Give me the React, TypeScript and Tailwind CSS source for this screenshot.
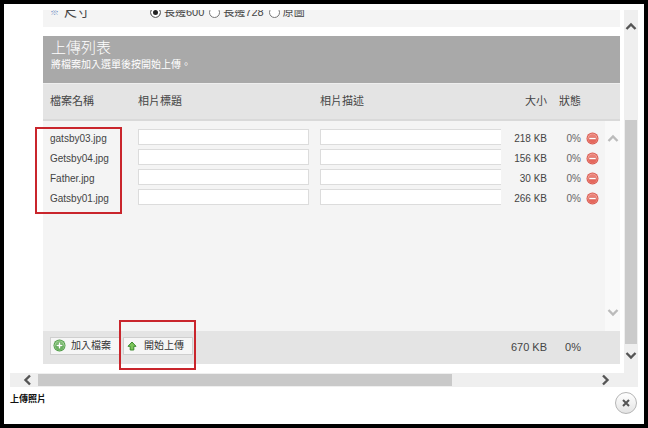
import React from "react";

type UploadFile = { name: string; size: string; progress: string };

const files: UploadFile[] = [
  { name: "gatsby03.jpg", size: "218 KB", progress: "0%" },
  { name: "Getsby04.jpg", size: "156 KB", progress: "0%" },
  { name: "Father.jpg", size: "30 KB", progress: "0%" },
  { name: "Gatsby01.jpg", size: "266 KB", progress: "0%" },
];

const sizes = ["長邊600", "長邊728", "原圖"];

function Chevron({ dir, className }: { dir: "up" | "down" | "left" | "right"; className?: string }) {
  const points = {
    up: "1.5,8 6,3.5 10.5,8",
    down: "1.5,4 6,8.5 10.5,4",
    left: "8,1.5 3.5,6 8,10.5",
    right: "4,1.5 8.5,6 4,10.5",
  }[dir];
  return (
    <svg viewBox="0 0 12 12" className={`size-3 ${className ?? ""}`} fill="none" stroke="currentColor" strokeWidth="2.4">
      <polyline points={points} />
    </svg>
  );
}

function RemoveIcon() {
  return (
    <svg viewBox="0 0 13 13" className="size-[13px]">
      <circle cx="6.5" cy="6.5" r="6" fill="#d9594f" />
      <circle cx="6.5" cy="6.5" r="5" fill="#f3aaa2" />
      <circle cx="6.5" cy="6.5" r="4.3" fill="#ea8075" />
      <path d="M2.2 7a4.3 4.3 0 0 0 8.6 0z" fill="#e4685d" />
      <rect x="3" y="5.5" width="7" height="2.1" rx="0.6" fill="#fff" stroke="#cf5148" strokeWidth="0.5" />
    </svg>
  );
}

function AddIcon() {
  return (
    <svg viewBox="0 0 13 13" className="size-[13px] shrink-0">
      <circle cx="6.5" cy="6.5" r="6" fill="#4d9a45" />
      <circle cx="6.5" cy="6.5" r="5.1" fill="#b4dcab" />
      <circle cx="6.5" cy="6.5" r="4.4" fill="#82bf77" />
      <path d="M2.1 6.8a4.4 4.4 0 0 0 8.8 0z" fill="#6bb160" />
      <path d="M6.5 3.4v6.2M3.4 6.5h6.2" stroke="#4a9440" strokeWidth="2.6" />
      <path d="M6.5 3.6v5.8M3.6 6.5h5.8" stroke="#fff" strokeWidth="1.6" />
    </svg>
  );
}

function StartIcon() {
  return (
    <svg viewBox="0 0 10 10" className="size-[10px] shrink-0">
      <path d="M5 1 9 5.3H6.8V9H3.2V5.3H1z" fill="#7cc45a" stroke="#3a8a2c" strokeWidth="1" strokeLinejoin="round" />
    </svg>
  );
}

const toolButton =
  "flex h-[18px] w-[70px] items-center border border-[#cfcfcf] bg-[#f6f6f6] text-[10px] leading-4 whitespace-nowrap text-[#333]";

export default function App() {
  return (
    <div className="flex h-screen flex-col overflow-hidden border-4 border-black bg-white px-[6px] pt-[6px] font-['Liberation_Sans','Noto_Sans_CJK_TC',sans-serif] text-[#444]">
      <div className="flex">
        <main className="min-w-0 flex-1 pr-1 pb-[9px] pl-[33px]">
          <fieldset aria-label="尺寸" className="flex h-[17px] items-end overflow-hidden bg-[#f4f4f4] pb-[5px] text-[11px] leading-5">
            <span className="w-[21px] pl-[7px] text-[9px] text-[#6f8fc4]" aria-hidden="true">※</span>
            <span className="w-[86px] text-[13px]">尺寸</span>
            {sizes.map((label, i) => (
              <label key={label} className="mr-[5px] flex items-center gap-[3px]">
                <input
                  type="radio"
                  name="size"
                  defaultChecked={i === 0}
                  className="size-[11px] appearance-none rounded-full border border-[#777] bg-white checked:bg-[#222] checked:shadow-[inset_0_0_0_2px_white]"
                />
                {label}
              </label>
            ))}
          </fieldset>

          <header className="mt-[9px] h-[47px] bg-[#a9a9a9] px-2 pt-[2px] text-white">
            <h1 className="text-[15px] leading-5 font-light">上傳列表</h1>
            <p className="text-[10px] leading-[14px]">將檔案加入選單後按開始上傳。</p>
          </header>

          <table className="w-full table-fixed border-separate border-spacing-0 bg-[#f4f4f4] text-[10px]">
            <colgroup>
              <col className="w-[95px]" />
              <col className="w-[182px]" />
              <col />
              <col className="w-[46px]" />
              <col className="w-[34px]" />
              <col className="w-[24px]" />
              <col className="w-[15px]" />
            </colgroup>
            <thead>
              <tr className="h-[38px] bg-[#e4e4e4] text-left text-[11px] *:border-t *:border-b-2 *:border-t-[#eee] *:border-b-[#d9d9d9] *:p-0 *:font-normal">
                <th scope="col"><span className="pl-[7px]">檔案名稱</span></th>
                <th scope="col">相片標題</th>
                <th scope="col">相片描述</th>
                <th scope="col" className="text-right">大小</th>
                <th scope="col" className="text-right">狀態</th>
                <td colSpan={2} />
              </tr>
            </thead>
            <tbody>
              <tr className="h-2">
                <td className="relative p-0">
                  <div className="pointer-events-none absolute top-[6px] left-[-8px] size-[87px] border-2 border-[#c9252c]" />
                </td>
                <td colSpan={5} className="p-0" />
                <td rowSpan={6} className="h-px bg-[#f9f9f9] p-0">
                  <div className="flex h-[210px] flex-col items-center justify-between pt-3 pb-[13px] text-[#bbb]">
                    <button type="button" aria-label="向上捲動清單"><Chevron dir="up" /></button>
                    <button type="button" aria-label="向下捲動清單"><Chevron dir="down" /></button>
                  </div>
                </td>
              </tr>
              {files.map((file) => (
                <tr key={file.name} className="h-5 *:p-0 *:align-top *:leading-5">
                  <td><span className="pl-[7px]">{file.name}</span></td>
                  <td>
                    <input aria-label={`${file.name} 相片標題`} className="block h-4 w-[171px] border border-[#dcdcdc] bg-white px-1" />
                  </td>
                  <td>
                    <input aria-label={`${file.name} 相片描述`} className="block h-4 w-full border border-r-0 border-[#dcdcdc] bg-white px-1" />
                  </td>
                  <td className="text-right">{file.size}</td>
                  <td className="text-right text-[#666]">{file.progress}</td>
                  <td>
                    <button type="button" aria-label={`移除 ${file.name}`} className="flex h-[18px] items-center pl-[5px]">
                      <RemoveIcon />
                    </button>
                  </td>
                </tr>
              ))}
              <tr className="h-[122px]"><td colSpan={6} className="p-0" /></tr>
            </tbody>
            <tfoot>
              <tr className="h-[33px] bg-[#e4e4e4] text-[11px] *:p-0">
                <td colSpan={3}>
                  <div className="flex gap-[3px] pb-1 pl-[7px]">
                    <button type="button" className={`${toolButton} gap-[5px] pl-[2px]`}>
                      <AddIcon />
                      加入檔案
                    </button>
                    <div className="relative">
                      <button type="button" className={`${toolButton} gap-[7px] pl-[3px]`}>
                        <StartIcon />
                        開始上傳
                      </button>
                      <div className="pointer-events-none absolute -top-[17px] -right-[3px] -bottom-[15px] -left-1 border-2 border-[#c9252c]" />
                    </div>
                  </div>
                </td>
                <td className="text-right">670 KB</td>
                <td className="text-right">0%</td>
                <td colSpan={2} />
              </tr>
            </tfoot>
          </table>
        </main>

        <div className="flex w-[14px] flex-col bg-[#efefef] px-px text-[#555]">
          <button type="button" aria-label="向上捲動" className="flex h-[34px] items-center justify-center"><Chevron dir="up" /></button>
          <div className="h-[76px]" />
          <div className="flex-1 bg-[#cbcbcb]" />
          <button type="button" aria-label="向下捲動" className="mb-[7px] flex h-[22px] items-center justify-center"><Chevron dir="down" /></button>
        </div>
      </div>

      <div className="flex h-[14px] bg-[#efefef] py-px text-[#555]">
        <button type="button" aria-label="向左捲動" className="flex w-7 items-center justify-end pr-1"><Chevron dir="left" /></button>
        <div className="w-[66%] bg-[#c9c9c9]" />
        <div className="flex-1" />
        <button type="button" aria-label="向右捲動" className="flex w-[39px] items-center"><Chevron dir="right" /></button>
      </div>

      <footer className="flex items-start justify-between pt-[5px]">
        <strong className="text-[9px] leading-[14px] text-[#111]">上傳照片</strong>
        <button
          type="button"
          aria-label="關閉"
          className="mr-px flex size-[22px] items-center justify-center rounded-full border border-[#b5b5b5] bg-linear-to-b from-white to-[#e4e4e4] text-[#555]"
        >
          <svg viewBox="0 0 8 8" className="size-2" stroke="currentColor" strokeWidth="2">
            <path d="M1 1l6 6M7 1 1 7" />
          </svg>
        </button>
      </footer>
    </div>
  );
}
